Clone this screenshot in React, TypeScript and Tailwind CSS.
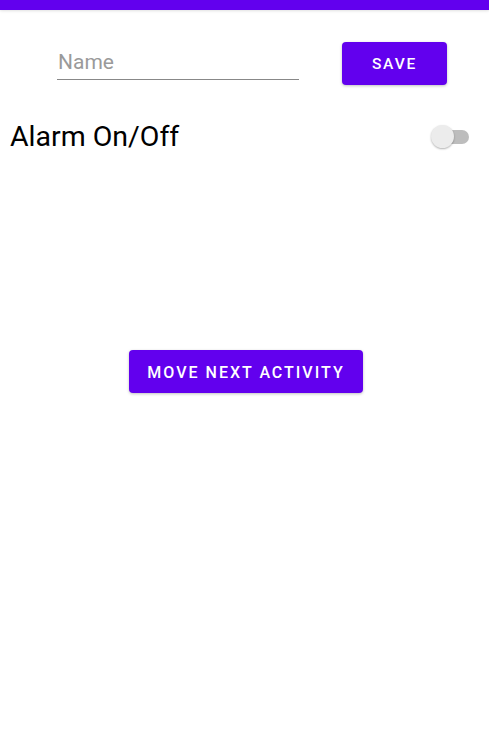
export default function App() {
  return (
    <div className="relative h-[732px] w-[489px] overflow-hidden bg-white font-['Roboto',sans-serif]">
      <div className="h-[10px] bg-[#6200ee] shadow-[0_1px_3px_rgba(0,0,0,0.12)]" />

      <div className="flex items-start pt-[32px]">
        <div className="ml-[57px] w-[242px] pt-[3px]">
          <div className="h-[35px] border-b border-[#888888] pl-px text-[21px] leading-[35px] text-[#9a9a9a]">
            Name
          </div>
        </div>
        <button
          type="button"
          className="ml-[43px] h-[43px] w-[105px] rounded-[4px] bg-[#6200ee] pt-[2px] text-[15.5px] font-medium tracking-[0.12em] text-white shadow-[0_1px_3px_rgba(0,0,0,0.25)]"
        >
          SAVE
        </button>
      </div>

      <div className="mt-[32px] flex items-center justify-between pl-[10px] pr-[20px]">
        <span className="text-[28.5px] leading-[40px] text-black">Alarm On/Off</span>
        <div className="relative h-[24px] w-[38px]">
          <div className="absolute left-[4px] right-0 top-[5px] h-[14px] rounded-full bg-[#bdbdbd]" />
          <div className="absolute left-0 top-0 h-[23px] w-[23px] rounded-full bg-[#ececec] shadow-[0_1px_2px_rgba(0,0,0,0.3)]" />
        </div>
      </div>

      <div className="mt-[193px] flex justify-center">
        <button
          type="button"
          className="ml-[3px] h-[43px] w-[234px] rounded-[4px] bg-[#6200ee] pt-[2px] text-[16px] font-medium tracking-[0.125em] text-white shadow-[0_1px_3px_rgba(0,0,0,0.25)]"
        >
          MOVE NEXT ACTIVITY
        </button>
      </div>
    </div>
  );
}
